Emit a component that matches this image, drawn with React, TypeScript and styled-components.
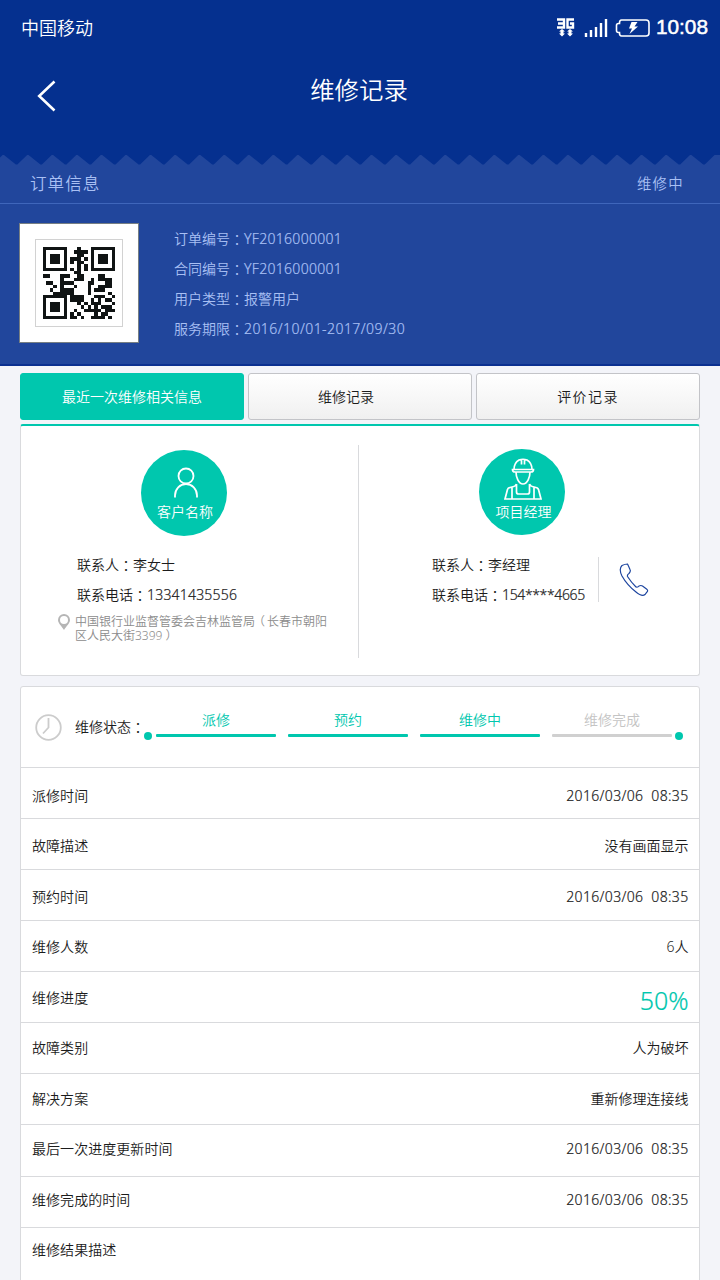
import React from 'react';
import styled, { createGlobalStyle } from 'styled-components';

const teal = '#00c7ae';
const line = '#d9dadd';

const Global = createGlobalStyle`
  * { box-sizing: border-box; }
  body { margin: 0; background: #f3f4f9; }
`;

const Page = styled.div`
  width: 720px;
  height: 1280px;
  overflow: hidden;
  background: #f3f4f9;
  color: #1c1c1c;
  font: 350 14px/20px 'Noto Sans', 'Noto Sans CJK SC', sans-serif;
  white-space: nowrap;
`;

const TopArea = styled.header`
  height: 155px;
  background: #05308f;
  color: #fff;
`;

const StatusBar = styled.div`
  height: 56px;
  padding: 0 12px 0 21px;
  display: flex;
  align-items: center;
  justify-content: space-between;
  font-size: 18px;
`;

const StatusIcons = styled.div`
  display: flex;
  align-items: center;
`;

const Clock = styled.span`
  margin-left: 6px;
  padding-bottom: 2px;
  font: 400 20.8px/24px 'Liberation Sans', sans-serif;
  -webkit-text-stroke: 0.5px #fff;
`;

const TitleBar = styled.div`
  height: 70px;
  padding: 0 38px 0 37px;
  display: grid;
  grid-template-columns: 19px 1fr 19px;
  align-items: center;
`;

const Title = styled.h1`
  margin: 0 1px 2px 0;
  text-align: center;
  font-size: 24.4px;
  font-weight: 350;
  line-height: 36px;
`;

const BackIcon = styled.svg`
  margin-top: 9px;
`;

const Order = styled.section`
  height: 211px;
  background: #21469c;
  color: #a9c0f4;
  border-bottom: 2px solid #0b3090;
`;

const Wave = styled.svg`
  display: block;
`;

const OrderHead = styled.div`
  height: 37px;
  padding: 0 36px 3px 30px;
  display: flex;
  align-items: center;
  justify-content: space-between;
  border-bottom: 1px solid #3f66bb;
`;

const OrderTitle = styled.span`
  font-size: 16.6px;
  letter-spacing: 1px;
`;

const OrderState = styled.span`
  font-size: 14.4px;
  letter-spacing: 1.3px;
`;

const OrderBody = styled.div`
  display: flex;
  padding: 19px 19px 0;
`;

const QrFrame = styled.div`
  width: 120px;
  height: 120px;
  border: 1px solid #777f83;
  background: #fff;
  display: grid;
  place-items: center;
`;

const QrInner = styled.div`
  width: 88px;
  height: 88px;
  padding: 7px;
  border: 1px solid #d2d2d2;
`;

const OrderLines = styled.div`
  margin-left: 35px;
  padding-top: 1px;
  line-height: 30px;
`;

const OrderLine = styled.div`
  height: 30px;
`;

const Tabs = styled.nav`
  display: grid;
  grid-template-columns: repeat(3, 1fr);
  gap: 4px;
  padding: 7px 20px 4px;
`;

const Tab = styled.button<{ $active?: boolean; $spacing?: number; $inset?: number }>`
  height: 47px;
  padding: 1px ${(p) => p.$inset ?? 0}px 0 0;
  border: 1px solid ${(p) => (p.$active ? teal : '#c3c4c8')};
  border-radius: 3px;
  background: ${(p) => (p.$active ? teal : 'linear-gradient(#fff, #f0f0f0)')};
  color: ${(p) => (p.$active ? '#fff' : '#1c1c1c')};
  font: inherit;
  letter-spacing: ${(p) => p.$spacing ?? 0}px;
`;

const Card = styled.section`
  margin: 0 20px;
  background: #fff;
  border: 1px solid ${line};
  border-radius: 3px;
`;

const ContactCard = styled(Card)`
  height: 252px;
  border-top: 2px solid ${teal};
  display: grid;
  grid-template-columns: 338px 1fr;
`;

const Person = styled.div<{ $top: number }>`
  padding-top: ${(p) => p.$top}px;
`;

const Badge = styled.div<{ $left: number; $icon: number }>`
  width: 86px;
  height: 86px;
  margin-left: ${(p) => p.$left}px;
  padding-top: ${(p) => p.$icon}px;
  border-radius: 50%;
  background: ${teal};
  color: #fff;
  display: flex;
  flex-direction: column;
  align-items: center;
`;

const BadgeName = styled.span<{ $bottom: number; $left: number }>`
  margin: auto 0 ${(p) => p.$bottom}px ${(p) => p.$left}px;
  line-height: 20px;
`;

const Details = styled.div<{ $left: number; $top: number }>`
  margin: ${(p) => p.$top}px 0 0 ${(p) => p.$left}px;
  line-height: 30px;
`;

const DetailLine = styled.div`
  height: 30px;
`;

const Manager = styled.div`
  display: flex;
`;

const Digits = styled.span<{ $spacing: number; $stroke?: number }>`
  letter-spacing: ${(p) => p.$spacing}px;
  -webkit-text-stroke: ${(p) => p.$stroke ?? 0.2}px currentColor;
`;

const CallButton = styled.div`
  margin: 22px 0 0 13px;
  width: 60px;
  height: 45px;
  padding-left: 20px;
  border-left: 1px solid ${line};
  display: flex;
  align-items: center;
`;

const Address = styled.div`
  display: flex;
  margin: 3px 0 0 36px;
  font-size: 12px;
  line-height: 14px;
  color: #8c8c8c;
`;

const Pin = styled.svg`
  margin-top: 1px;
`;

const AddressText = styled.div`
  margin-left: 4px;
  padding-top: 2px;
`;

const AddressLine = styled.div`
  height: 14px;
`;

const Divided = styled.div`
  height: 213px;
  margin-top: 19px;
  border-right: 1px solid ${line};
`;

const RepairCard = styled(Card)`
  margin-top: 10px;
  height: 620px;
`;

const Progress = styled.div`
  height: 81px;
  padding-left: 14px;
  display: flex;
  align-items: center;
  border-bottom: 1px solid ${line};
`;

const ProgressLabel = styled.span`
  width: 69px;
  height: 20px;
  margin-left: 13px;
`;

const Dot = styled.i`
  width: 8px;
  height: 8px;
  margin-top: 17px;
  border-radius: 50%;
  background: ${teal};
`;

const Steps = styled.div`
  display: flex;
  gap: 12px;
  margin: 0 3px 0 4px;
`;

const Step = styled.div<{ $done: boolean }>`
  width: 120px;
  height: 27px;
  margin-top: -7px;
  text-align: center;
  line-height: 20px;
  color: ${(p) => (p.$done ? teal : '#c4c4c4')};

  &::after {
    content: '';
    display: block;
    height: 3px;
    margin-top: 4px;
    border-radius: 1px;
    background: ${(p) => (p.$done ? teal : '#d0d0d0')};
  }
`;

const Row = styled.div<{ $offset: number }>`
  height: 51.07px;
  padding: ${(p) => Math.max(p.$offset, 0)}px 10.5px ${(p) => Math.max(-p.$offset, 0)}px 11px;
  display: flex;
  align-items: center;
  justify-content: space-between;
  border-bottom: 1px solid ${line};

  &:last-child {
    border-bottom-color: transparent;
  }
`;

const RowName = styled.span`
  letter-spacing: 0.05px;
`;

const Value = styled.span<{ $large?: boolean; $date?: boolean }>`
  white-space: pre;
  font-size: ${(p) => (p.$large ? 25 : 14)}px;
  color: ${(p) => (p.$large ? teal : 'inherit')};
  padding-top: ${(p) => (p.$large ? 5 : 0)}px;
  letter-spacing: ${(p) => (p.$date ? 0.35 : 0)}px;
  -webkit-text-stroke: ${(p) => (p.$large || p.$date ? 0.2 : 0)}px currentColor;
`;

/* Full-width punctuation sits in the middle of its cell in the TC face. */
const Mark = styled.span`
  font-family: 'Noto Sans CJK TC', sans-serif;
  line-height: 1;
  vertical-align: -1px;
`;

const Bracket = styled.span<{ $close: boolean }>`
  font-family: 'Noto Sans CJK TC', sans-serif;
  line-height: 1;
  margin-left: ${(p) => (p.$close ? 3 : -2)}px;
  margin-right: ${(p) => (p.$close ? 0 : 2)}px;
`;

function Text({ children }: { children: string }) {
  return (
    <>
      {children.split(/([：（）])/).map((part, i) => {
        if (i % 2 === 0) return part;
        if (part === '：') return <Mark key={i}>{part}</Mark>;
        return <Bracket key={i} $close={part === '）'}>{part}</Bracket>;
      })}
    </>
  );
}

const qrRows = [
  '#######...#...#######',
  '#.....#..####.#.....#',
  '#.###.#...##..#.###.#',
  '#.###.#.###.#.#.###.#',
  '#.###.#.#.##..#.###.#',
  '#.....#...#.#.#.....#',
  '#######.#.#.#.#######',
  '.........##..........',
  '##...###..##....##...',
  '.....#...###..#.####.',
  '.##..####....##...##.',
  '...#.#...#...#..####.',
  '..#..####....#.###...',
  '...######....#.....#.',
  '#######.####...###..#',
  '#.....#.####..#.#.##.',
  '#.###.#...#.#.###...#',
  '#.###.#....#.#.#.###.',
  '#.###.#..#..#####.###',
  '#.....#.#.#....#.##..',
  '#######.##.#..####.#.',
];

function QrCode() {
  const d = qrRows
    .flatMap((row, y) => [...row].map((c, x) => (c === '#' ? `M${x} ${y}h1v1h-1z` : '')))
    .join('');
  return (
    <svg width="72" height="72" viewBox="0 0 21 21" shapeRendering="crispEdges">
      <path d={d} fill="#101414" />
    </svg>
  );
}

const wavePoints = Array.from({ length: 31 }, (_, i) => {
  const x = 3.3 + (i - 1) * 24.55;
  return `${x - 12},9.5 ${x - 10.5},9.5 ${x - 0.7},0 ${x + 0.7},0`;
}).join(' ');

const orderLines: [string, string, number][] = [
  ['订单编号：', 'YF2016000001', 0.3],
  ['合同编号：', 'YF2016000001', 0.3],
  ['用户类型：', '报警用户', 0],
  ['服务期限：', '2016/10/01-2017/09/30', 0.44],
];

const steps = ['派修', '预约', '维修中', '维修完成'];

const rows: [string, string][] = [
  ['派修时间', '2016/03/06  08:35'],
  ['故障描述', '没有画面显示'],
  ['预约时间', '2016/03/06  08:35'],
  ['维修人数', '6人'],
  ['维修进度', '50%'],
  ['故障类别', '人为破坏'],
  ['解决方案', '重新修理连接线'],
  ['最后一次进度更新时间', '2016/03/06  08:35'],
  ['维修完成的时间', '2016/03/06  08:35'],
  ['维修结果描述', ''],
];

export default function App() {
  return (
    <Page>
      <Global />
      <TopArea>
        <StatusBar>
          <span>中国移动</span>
          <StatusIcons>
            <svg width="93" height="20" viewBox="0 0 93 20" fill="none" stroke="#fff">
              <path d="M0 1.500h7v8H0M1 5.500h6M17 1.500h-6.500v8H16v-4h-3" strokeWidth="2.400" />
              <path d="M5 11l3 2.500H6.500v2H8L5 18.500l-3-3h1.500v-2H2zM13 11l3 2.500h-1.500v2H16l-3 3-3-3h1.500v-2H10z" fill="#fff" stroke="none" />
              <path d="M29 15v4M34 12v7M39 9v10M44 5v14M49 1v18" strokeWidth="2.400" />
              <path d="M64.500 2H89q3 0 3 3v10q0 3-3 3H64.500q-2 0-2-3v-.5h-1q-2 0-2-2v-5q0-2 2-2h1V5q0-3 2-3z" strokeWidth="1.600" />
              <path d="M74.500 4h6l-3 4.500h3.500L72.500 16l2.500-5.500h-3z" fill="#fff" stroke="none" />
            </svg>
            <Clock>10:08</Clock>
          </StatusIcons>
        </StatusBar>
        <TitleBar>
          <BackIcon width="19" height="32" viewBox="0 0 19 32" fill="none" stroke="#fff" strokeWidth="2.600">
            <path d="M17.500 1.500L2.200 16l15.300 14.500" />
          </BackIcon>
          <Title>维修记录</Title>
        </TitleBar>
      </TopArea>

      <Order>
        <Wave width="720" height="12" viewBox="0 0 720 12">
          <polygon points={`-40,0 ${wavePoints} 760,0`} fill="#05308f" />
        </Wave>
        <OrderHead>
          <OrderTitle>订单信息</OrderTitle>
          <OrderState>维修中</OrderState>
        </OrderHead>
        <OrderBody>
          <QrFrame>
            <QrInner>
              <QrCode />
            </QrInner>
          </QrFrame>
          <OrderLines>
            {orderLines.map(([name, value, spacing]) => (
              <OrderLine key={name}>
                <Text>{name}</Text>
                <Digits $spacing={spacing} $stroke={spacing ? 0.2 : 0}>{value}</Digits>
              </OrderLine>
            ))}
          </OrderLines>
        </OrderBody>
      </Order>

      <Tabs>
        <Tab $active>最近一次维修相关信息</Tab>
        <Tab $inset={28}>维修记录</Tab>
        <Tab $spacing={1.4}>评价记录</Tab>
      </Tabs>

      <ContactCard>
        <Divided>
          <Person $top={5}>
            <Badge $left={120} $icon={17}>
              <svg width="28" height="32" viewBox="0 0 28 32" fill="none" stroke="#fff" strokeWidth="1.800">
                <circle cx="16" cy="9" r="7.500" />
                <path d="M5 30.500v-2a11 11.500 0 0 1 22 0v2" />
              </svg>
              <BadgeName $bottom={14} $left={2}>客户名称</BadgeName>
            </Badge>
            <Details $left={56} $top={14}>
              <DetailLine><Text>联系人：李女士</Text></DetailLine>
              <DetailLine>
                <Text>联系电话：</Text>
                <Digits $spacing={0.2}>13341435556</Digits>
              </DetailLine>
            </Details>
            <Address>
              <Pin width="14" height="17" viewBox="0 0 14 17">
                <path fillRule="evenodd" fill="#b5b5b5" d="M7 0a6 6 0 0 1 6 6c0 3-3.500 6-6 10C4.500 12 1 9 1 6a6 6 0 0 1 6-6zm0 2a4 4 0 1 0 0 8 4 4 0 0 0 0-8z" />
              </Pin>
              <AddressText>
                <AddressLine><Text>中国银行业监督管委会吉林监管局（长春市朝阳</Text></AddressLine>
                <AddressLine><Text>区人民大街3399）</Text></AddressLine>
              </AddressText>
            </Address>
          </Person>
        </Divided>
        <Person $top={23}>
          <Badge $left={120} $icon={9}>
            <svg width="42" height="44" viewBox="0 0 42 44" fill="none" stroke="#fff" strokeWidth="1.700">
              <path d="M13 11.500Q13 5 18 2q4-1.500 8 0 5 3 5 9.500M20.500 1.500v5M23.500 1.500v5" />
              <path d="M11.500 11.500h21q0 2.500-2.500 2.500H14q-2.500 0-2.500-2.500z" />
              <path d="M15 14c0 5 2.500 12 7 12s7-7 7-12M15.500 26v8q0 2 2 2h9q2 0 2-2v-8M15.500 26q-1 2.500-4.500 3-4 .5-4.500 2.500L4 41h36l-2.500-9.500q-.5-2-4.500-2.500-3.500-.5-4.500-3M11 29.500V41M33 29.500V41" />
            </svg>
            <BadgeName $bottom={13} $left={3}>项目经理</BadgeName>
          </Badge>
          <Manager>
            <Details $left={73} $top={15}>
              <DetailLine><Text>联系人：李经理</Text></DetailLine>
              <DetailLine>
                <Text>联系电话：</Text>
                <Digits $spacing={-0.36}>154****4665</Digits>
              </DetailLine>
            </Details>
            <CallButton>
              <svg width="30" height="34" viewBox="0 0 30 34" fill="none" stroke="#1d459f" strokeWidth="1.200">
                <path d="M3 2.500Q6 1 8.500 1 9.500 3 11 6.500q1 2-1 4-2 1-1.500 3Q12 19 17 24q2 .5 3-1 2-1 3.500 0l4 3q2 1.500.5 3l-2 2.500q-3 2.500-9-2.500Q8 22 3 13-.5 6 3 2.500z" />
              </svg>
            </CallButton>
          </Manager>
        </Person>
      </ContactCard>

      <RepairCard>
        <Progress>
          <svg width="27" height="27" viewBox="0 0 27 27" fill="none" stroke="#ccc" strokeWidth="1.800">
            <circle cx="13.500" cy="13.500" r="12.300" />
            <path d="M13.500 4v9.500l-5.500 6" />
          </svg>
          <ProgressLabel><Text>维修状态：</Text></ProgressLabel>
          <Dot />
          <Steps>
            {steps.map((s, i) => (
              <Step key={s} $done={i < 3}>{s}</Step>
            ))}
          </Steps>
          <Dot />
        </Progress>
        {rows.map(([name, value], i) => (
          <Row key={name} $offset={5.4 - i * 1.15}>
            <RowName>{name}</RowName>
            <Value $large={value === '50%'} $date={value.includes('/')}>{value}</Value>
          </Row>
        ))}
      </RepairCard>
    </Page>
  );
}
